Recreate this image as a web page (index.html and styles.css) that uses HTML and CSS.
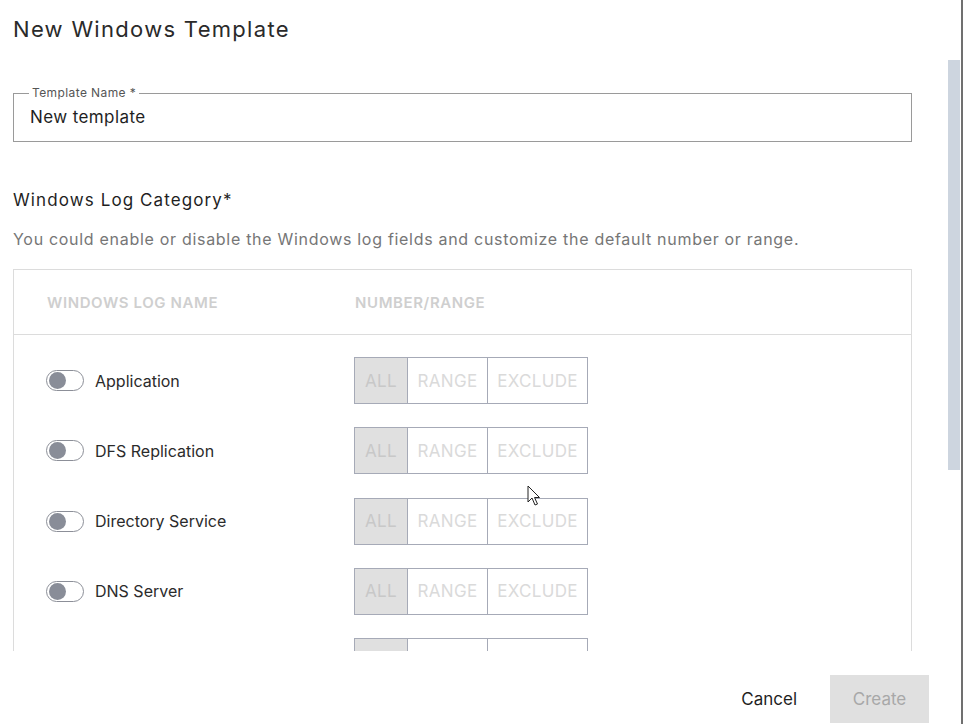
FILE: index.html
```html
<!DOCTYPE html>
<html>
<head>
<meta charset="utf-8">
<link rel="stylesheet" href="styles.css">
</head>
<body>
<div class="dialog">
  <div class="scroll">
    <h1 class="title">New Windows Template</h1>
    <fieldset class="field">
      <legend>Template Name *</legend>
      <div class="field-value">New template</div>
    </fieldset>
    <h2 class="section">Windows Log Category*</h2>
    <p class="desc">You could enable or disable the Windows log fields and customize the default number or range.</p>
    <div class="table">
      <div class="thead">
        <div class="th">WINDOWS LOG NAME</div>
        <div class="th">NUMBER/RANGE</div>
      </div>
      <div class="tbody">
        <div class="row">
          <div class="name"><span class="toggle"><span class="knob"></span></span><span>Application</span></div>
          <div class="seg"><span class="cell all">ALL</span><span class="cell range">RANGE</span><span class="cell excl">EXCLUDE</span></div>
        </div>
        <div class="row">
          <div class="name"><span class="toggle"><span class="knob"></span></span><span>DFS Replication</span></div>
          <div class="seg"><span class="cell all">ALL</span><span class="cell range">RANGE</span><span class="cell excl">EXCLUDE</span></div>
        </div>
        <div class="row">
          <div class="name"><span class="toggle"><span class="knob"></span></span><span>Directory Service</span></div>
          <div class="seg"><span class="cell all">ALL</span><span class="cell range">RANGE</span><span class="cell excl">EXCLUDE</span></div>
        </div>
        <div class="row">
          <div class="name"><span class="toggle"><span class="knob"></span></span><span>DNS Server</span></div>
          <div class="seg"><span class="cell all">ALL</span><span class="cell range">RANGE</span><span class="cell excl">EXCLUDE</span></div>
        </div>
        <div class="row">
          <div class="name"><span class="toggle"><span class="knob"></span></span></div>
          <div class="seg"><span class="cell all"></span><span class="cell range"></span><span class="cell excl"></span></div>
        </div>
      </div>
    </div>
  </div>
  <div class="footer">
    <button class="btn cancel">Cancel</button>
    <button class="btn create">Create</button>
  </div>
  <div class="thumb"></div>
  <svg class="cursor" width="14" height="22" viewBox="0 0 14 22"><path d="M1 1 L1 17 L5 13 L8 20 L10.5 19 L7.5 12.5 L12.5 12.5 Z" fill="#fff" stroke="#222" stroke-width="1" stroke-linejoin="round"/></svg>
</div>
</body>
</html>
```

FILE: styles.css
```css
* { box-sizing: border-box; }
html, body { margin: 0; padding: 0; background: #fff; }
body {
  font-family: Inter, "Noto Sans", "Liberation Sans", sans-serif;
  color: #222;
}
.dialog {
  position: relative;
  width: 963px;
  height: 724px;
  border-right: 2px solid #707070;
  overflow: hidden;
}
.scroll {
  height: 651px;
  overflow: hidden;
  padding: 15px 0 0 13px;
  width: 912px;
}
.title {
  margin: 0;
  font-size: 22px;
  font-weight: 400;
  line-height: 28px;
  letter-spacing: 1.3px;
  color: #2a2a2a;
}
.field {
  margin: 43px 0 0 0;
  padding: 0 16px 0 16px;
  width: 899px;
  height: 56px;
  border: 1px solid #9a9a9a;
  border-radius: 0;
}
.field legend {
  font-size: 12px;
  color: #555;
  padding: 0 3px;
  margin-left: -1px;
  line-height: 14px;
  letter-spacing: 0.4px;
}
.field-value {
  font-size: 17px;
  line-height: 20px;
  padding-top: 7px;
  letter-spacing: 0.4px;
  color: #1f1f1f;
}
.section {
  margin: 46px 0 0 0;
  font-size: 17px;
  font-weight: 400;
  line-height: 24px;
  letter-spacing: 1.1px;
  color: #1f1f1f;
}
.desc {
  margin: 15px 0 0 0;
  font-size: 16px;
  line-height: 24px;
  letter-spacing: 0.7px;
  color: #767676;
}
.table {
  margin-top: 18px;
  width: 899px;
  border: 1px solid #dcdcdc;
}
.thead {
  display: grid;
  grid-template-columns: 308px 1fr;
  height: 65px;
  align-items: center;
  padding-left: 33px;
  border-bottom: 1px solid #dcdcdc;
}
.th {
  font-size: 15px;
  font-weight: 600;
  color: #cfcfcf;
  letter-spacing: 0.6px;
}
.tbody {
  display: flex;
  flex-direction: column;
  gap: 23.3px;
  padding: 22px 0 40px 32px;
}
.row {
  display: grid;
  grid-template-columns: 308px 1fr;
  align-items: center;
  height: 47px;
}
.name {
  display: flex;
  align-items: center;
  gap: 11px;
  font-size: 16px;
  color: #2b2b2b;
}
.toggle {
  position: relative;
  width: 38px;
  height: 21px;
  border: 1px solid #8c8f98;
  border-radius: 11px;
  background: #fff;
  display: inline-block;
}
.knob {
  position: absolute;
  left: 2px;
  top: 1px;
  width: 17px;
  height: 17px;
  border-radius: 50%;
  background: #898d98;
}
.seg {
  display: flex;
  width: 234px;
  height: 47px;
  border: 1px solid #a6aab7;
}
.cell {
  display: flex;
  align-items: center;
  justify-content: center;
  font-size: 17px;
  letter-spacing: 0.3px;
  color: #dadada;
  height: 100%;
}
.cell + .cell { border-left: 1px solid #a6aab7; }
.all { width: 52px; background: #e0e0e0; color: #c8c8c8; }
.range { width: 80px; }
.excl { flex: 1; }
.footer {
  height: 73px;
  display: flex;
  justify-content: flex-end;
  align-items: center;
  gap: 17px;
  padding: 0 32px 0 0;
}
.btn {
  font-family: inherit;
  font-size: 17px;
  border: 0;
  height: 48px;
  margin-top: 22px;
  cursor: default;
}
.cancel {
  background: transparent;
  color: #1f1f1f;
  padding: 0 16px;
}
.create {
  width: 99px;
  background: #e0e0e0;
  color: #a8a8a8;
}
.thumb {
  position: absolute;
  left: 948px;
  top: 60px;
  width: 12px;
  height: 410px;
  background: #cdd5df;
}
.cursor {
  position: absolute;
  left: 527px;
  top: 485px;
}
```
